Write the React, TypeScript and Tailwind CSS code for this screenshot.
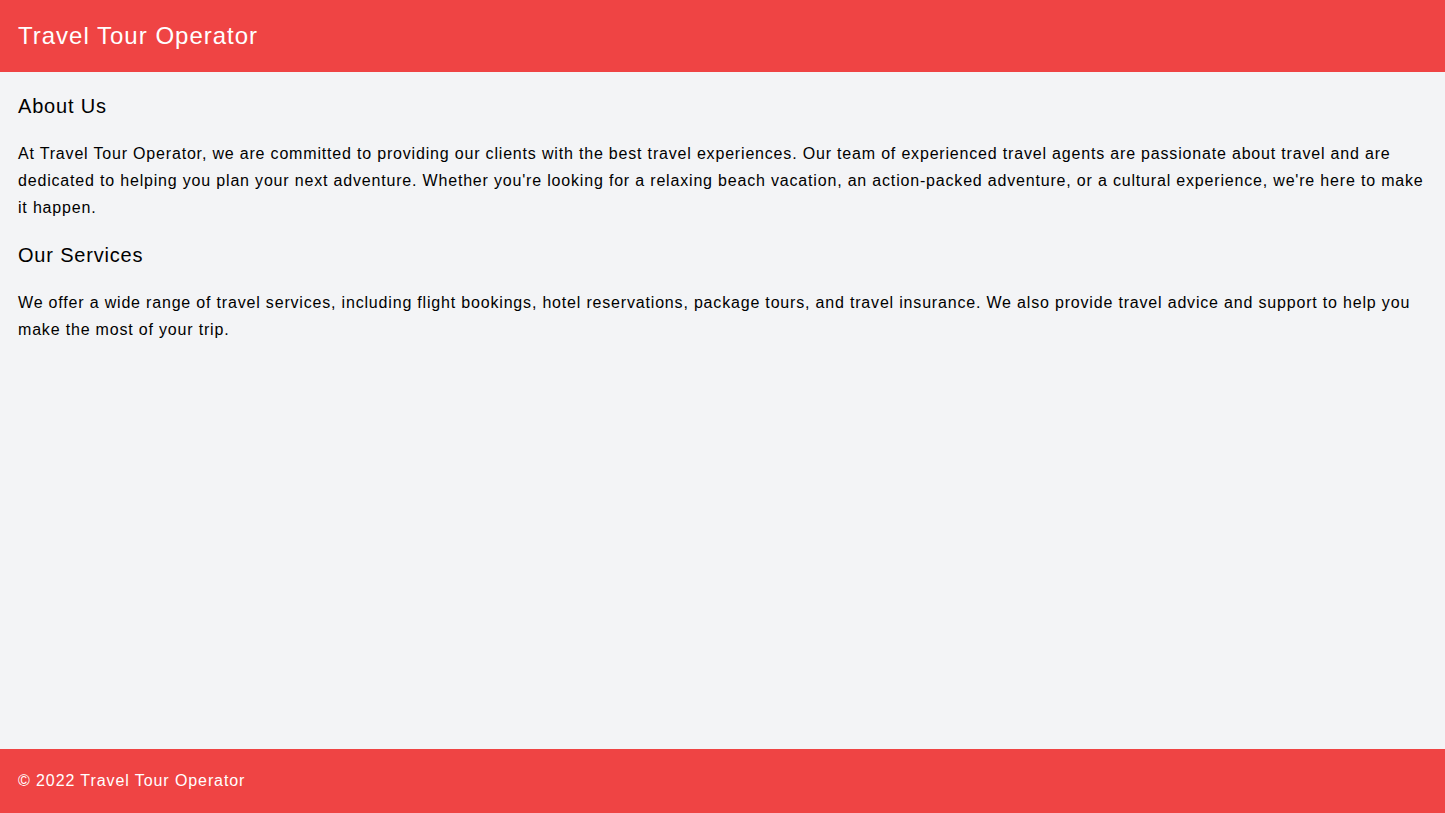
export default function App() {
    return (
        <div className="min-h-screen flex flex-col bg-[#f3f4f6] text-black font-['Liberation_Sans',Arial,sans-serif] tracking-[0.051em]">
            <header className="bg-[#ef4444] text-white px-[18px] py-5">
                <h1 className="text-2xl tracking-[1px]">Travel Tour Operator</h1>
            </header>

            <main className="flex-1 px-[18px] py-5 flex flex-col gap-5">
                <h2 className="text-xl">About Us</h2>
                <p className="leading-[27px]">
                    At Travel Tour Operator, we are committed to providing our clients with the best travel experiences. Our team of experienced travel agents are passionate about travel and are dedicated to helping you plan your next adventure. Whether you're looking for a relaxing beach vacation, an action-packed adventure, or a cultural experience, we're here to make it happen.
                </p>
                <h2 className="text-xl">Our Services</h2>
                <p className="leading-[27px]">
                    We offer a wide range of travel services, including flight bookings, hotel reservations, package tours, and travel insurance. We also provide travel advice and support to help you make the most of your trip.
                </p>
            </main>

            <footer className="bg-[#ef4444] text-white px-[18px] py-5">
                <p className="tracking-[0.057em]">&copy; 2022 Travel Tour Operator</p>
            </footer>
        </div>
    );
}
